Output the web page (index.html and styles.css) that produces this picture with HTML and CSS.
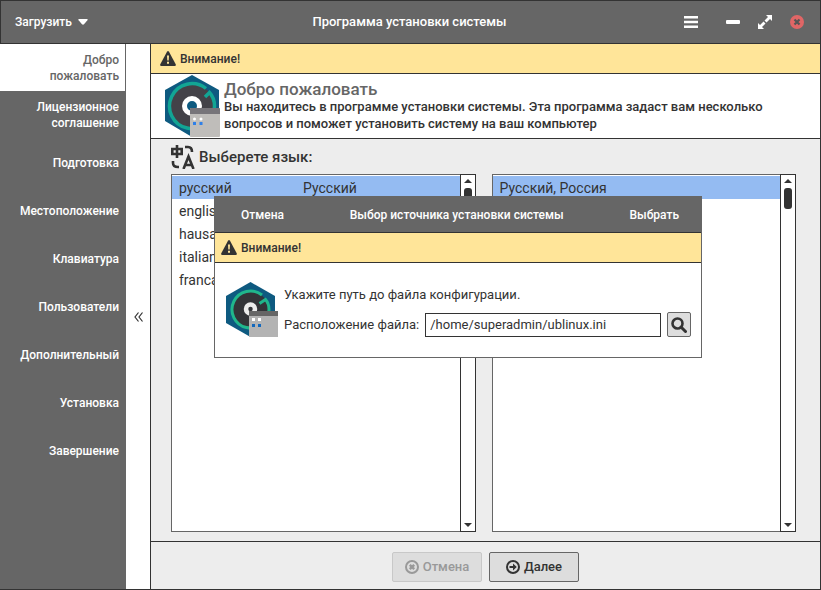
FILE: index.html
```html
<!DOCTYPE html>
<html lang="ru">
<head>
<meta charset="utf-8">
<meta name="viewport" content="width=device-width, initial-scale=1">
<title>Программа установки системы</title>
<link rel="stylesheet" href="styles.css">
</head>
<body>
<header class="titlebar">
  <button class="menu-button" type="button">Загрузить
    <svg width="10" height="6" viewBox="0 0 10 6" aria-hidden="true"><path d="M1 0h8q1.200 .3 .4 1.300L6 5.300q-1 .9-2 0L.6 1.300Q-.2.3 1 0z" fill="#fff"/></svg>
  </button>
  <h1 class="window-title">Программа установки системы</h1>
  <div class="window-controls">
    <button class="icon-button menu" type="button" aria-label="Меню">
      <svg width="14" height="12" viewBox="0 0 14 12"><path d="M0 1.200h14M0 6h14M0 10.800h14" stroke="#fff" stroke-width="2.400"/></svg>
    </button>
    <button class="icon-button" type="button" aria-label="Свернуть">
      <svg width="14" height="14" viewBox="0 0 14 14"><rect y="5" width="14" height="4" rx="1" fill="#fff"/></svg>
    </button>
    <button class="icon-button" type="button" aria-label="Развернуть">
      <svg width="14" height="14" viewBox="0 0 14 14"><path d="M8 0h6v6l-2-2-3.500 3.500-2-2L10 2zM0 8l2 2 3.500-3.500 2 2L4 12l2 2H0z" fill="#fff"/></svg>
    </button>
    <button class="icon-button" type="button" aria-label="Закрыть">
      <svg width="14" height="14" viewBox="0 0 14 14"><circle cx="7" cy="7" r="7" fill="#e06666"/><path d="M4.500 4.500l5 5m0-5l-5 5" stroke="#555" stroke-width="2.200"/></svg>
    </button>
  </div>
</header>

<div class="workspace">
  <nav class="steps" aria-label="Шаги установки">
    <a class="step current" href="#welcome">Добро пожаловать</a>
    <a class="step" href="#license">Лицензионное соглашение</a>
    <a class="step" href="#prepare">Подготовка</a>
    <a class="step" href="#location">Местоположение</a>
    <a class="step" href="#keyboard">Клавиатура</a>
    <a class="step" href="#users">Пользователи</a>
    <a class="step" href="#extra">Дополнительный</a>
    <a class="step" href="#install">Установка</a>
    <a class="step" href="#finish">Завершение</a>
  </nav>
  <button class="collapse" type="button" aria-label="Свернуть панель">
    <svg width="9" height="10" viewBox="0 0 9 10"><path d="M4.500.5L1 5l3.500 4.500M8.500.5L5 5l3.500 4.500" fill="none" stroke="#333" stroke-width="1.200"/></svg>
  </button>

  <main class="page">
    <div class="alert">
      <svg class="warning" viewBox="0 0 16 15" aria-hidden="true"><path d="M7 .8q1-1.600 2 0l6.700 12.400q.7 1.600-1 1.800H1.300q-1.700-.2-1-1.800z" fill="#333"/><path d="M7 4.500h2l-.3 5H7.300zM7 10.800h2v2H7z" fill="#ffe599"/></svg>
      Внимание!
    </div>
    <section class="welcome" id="welcome">
      <svg class="logo" width="55" height="62" viewBox="0 0 55 62" aria-hidden="true">
        <path d="M27 0l27 15v31L27 62 0 46V15z" fill="#0e5a80"/>
        <circle cx="27" cy="31" r="22" fill="#434248"/>
        <path d="M41 13.500A22.500 22.500 0 1 0 49.500 31q0-8-5-13.500l-4.500 4.500" fill="none" stroke="#12a594" stroke-width="3.500"/>
        <circle cx="27" cy="31" r="7.500" fill="#0e5a80" stroke="#fff" stroke-width="5"/>
        <rect x="25" y="33" width="30" height="29" rx="1" fill="#bfbdba"/>
        <path d="M25 39v-5q0-1 1-1h28q1 0 1 1v5z" fill="#77757a"/>
        <g fill="#fff"><circle cx="29.500" cy="44" r="1.500"/><circle cx="36" cy="44" r="1.500"/></g>
        <path d="M28 47h3v3h-3zM34.500 47h3v3h-3z" fill="#2f80e8"/>
      </svg>
      <div class="welcome-text">
        <h2 class="welcome-title">Добро пожаловать</h2>
        <p class="lead">Вы находитесь в программе установки системы. Эта программа задаст вам несколько вопросов и поможет установить систему на ваш компьютер</p>
      </div>
    </section>

    <section class="content">
      <h3 class="choose">
        <svg width="24" height="24" viewBox="0 0 24 24" aria-hidden="true"><g fill="none" stroke="#333" stroke-width="2.600"><path d="M1.300 4h9.400v5H1.300zM6 0v13M14 2h3q4 0 4 5M2 16v2q0 4 5 4h1"/><path d="M12.500 24l5-12.500 5 12.500M14.500 20h6"/></g></svg>
        Выберете язык:
      </h3>
      <div class="lists">
        <div class="listbox">
          <ul class="options">
            <li class="option selected"><span>русский</span><span>Русский</span></li>
            <li class="option"><span>english</span></li>
            <li class="option"><span>hausa</span></li>
            <li class="option"><span>italian</span></li>
            <li class="option"><span>francais</span></li>
          </ul>
          <div class="scrollbar"><i class="arrow up"></i><i class="thumb"></i><i class="arrow down"></i></div>
        </div>
        <div class="listbox">
          <ul class="options">
            <li class="option selected"><span class="full">Русский, Россия</span></li>
          </ul>
          <div class="scrollbar"><i class="arrow up"></i><i class="thumb"></i><i class="arrow down"></i></div>
        </div>
      </div>
    </section>

    <footer class="actions">
      <button class="action" type="button" disabled>
        <svg width="14" height="14" viewBox="0 0 14 14" aria-hidden="true"><circle cx="7" cy="7" r="6" fill="none" stroke="currentColor" stroke-width="2"/><path d="M4.800 4.800l4.400 4.400m0-4.400L4.800 9.200" stroke="currentColor" stroke-width="2.400"/></svg>
        Отмена
      </button>
      <button class="action" type="button">
        <svg width="14" height="14" viewBox="0 0 14 14" aria-hidden="true"><circle cx="7" cy="7" r="6" fill="none" stroke="currentColor" stroke-width="2"/><path d="M3.500 6H7V3.500L10.800 7 7 10.500V8H3.500z" fill="currentColor"/></svg>
        Далее
      </button>
    </footer>

    <div class="dialog" role="dialog" aria-labelledby="dialog-title">
      <div class="dialog-bar">
        <button class="dialog-button" type="button">Отмена</button>
        <h2 class="dialog-title" id="dialog-title">Выбор источника установки системы</h2>
        <button class="dialog-button" type="button">Выбрать</button>
      </div>
      <div class="alert dialog-alert">
        <svg class="warning" viewBox="0 0 16 15" aria-hidden="true"><path d="M7 .8q1-1.600 2 0l6.700 12.400q.7 1.600-1 1.800H1.300q-1.700-.2-1-1.800z" fill="#333"/><path d="M7 4.500h2l-.3 5H7.300zM7 10.800h2v2H7z" fill="#ffe599"/></svg>
        Внимание!
      </div>
      <div class="dialog-body">
        <svg class="logo" width="52" height="55" viewBox="0 0 52 55" aria-hidden="true">
          <path d="M24.500 0L49 14v27L24.500 55 0 41V14z" fill="#0e5a80"/>
          <circle cx="24.500" cy="27.500" r="18" fill="#333438"/>
          <path d="M36 13A18.500 18.500 0 1 0 43 27.500q0-6-3.500-10l-6 4" fill="none" stroke="#20b68c" stroke-width="3"/>
          <circle cx="24.500" cy="27" r="4.500" fill="#333438" stroke="#ececec" stroke-width="4.500"/>
          <path d="M23 29h29v26H23z" fill="#b3b3b3"/>
          <path d="M23 29h29v5H23z" fill="#666"/>
          <path d="M26 36h3v3h-3zM32 36h3v3h-3z" fill="#fff"/>
          <path d="M26 42h3v3h-3zM32 42h3v3h-3z" fill="#1268be"/>
        </svg>
        <form class="file-form">
          <p class="hint">Укажите путь до файла конфигурации.</p>
          <div class="file-row">
            <label for="path">Расположение файла:</label>
            <input class="path" id="path" type="text" value="/home/superadmin/ublinux.ini">
            <button class="browse" type="button" aria-label="Обзор">
              <svg width="16" height="16" viewBox="0 0 16 16"><circle cx="6.500" cy="6.500" r="5" fill="none" stroke="#333" stroke-width="2.600"/><path d="M10 10l4.500 4.500" stroke="#333" stroke-width="3" stroke-linecap="round"/></svg>
            </button>
          </div>
        </form>
      </div>
    </div>
  </main>
</div>
</body>
</html>
```
FILE: styles.css
```css
* { box-sizing: border-box; }

body {
  margin: 0;
  min-height: 100vh;
  display: flex;
  flex-direction: column;
  border: 1px solid #333;
  border-left: 0;
  background: #fff;
  color: #333;
  font: 500 13px/16px Roboto, "Liberation Sans", sans-serif;
}

h1, h2, h3, p, ul { margin: 0; padding: 0; }
ul { list-style: none; }
button, input { font: inherit; color: inherit; }
button { padding: 0; border: 0; background: none; }
svg { display: block; flex: none; }

.titlebar {
  display: grid;
  grid-template-columns: 1fr auto 1fr;
  align-items: center;
  height: 43px;
  padding: 0 16px 0 14px;
  border-bottom: 1px solid #333;
  border-left: 1px solid #333;
  background: #666;
  color: #fff;
}
.menu-button { display: flex; align-items: center; gap: 6px; justify-self: start; font-size: 12px; }
.window-title { font-size: 13px; font-weight: 500; }
.window-controls { display: flex; justify-content: flex-end; gap: 18px; }
.icon-button { display: flex; align-items: center; }
.menu { margin-right: 10px; }

.workspace { flex: 1; display: flex; }

.steps { flex: none; width: 126px; border-right: 1px solid #666; background: #666; }
.step {
  display: flex;
  align-items: center;
  justify-content: flex-end;
  height: 48px;
  padding: 0 6px 0 30px;
  color: #fff;
  font-size: 12px;
  text-align: right;
  text-decoration: none;
}
.current { height: 47px; background: #fff; color: #666; }
.collapse { flex: none; width: 24px; display: flex; align-items: center; justify-content: center; }

.page {
  position: relative;
  flex: 1;
  display: flex;
  flex-direction: column;
  border-left: 1px solid #333;
  background: #ededed;
}
.alert {
  display: flex;
  align-items: center;
  gap: 4px;
  height: 30px;
  padding: 0 9px;
  border-bottom: 1px solid #333;
  background: #ffe599;
  font-size: 12px;
}
.warning { width: 16px; height: 15px; }

.welcome {
  display: flex;
  gap: 4px;
  height: 65px;
  padding: 1px 32px 0 14px;
  border-bottom: 1px solid #333;
  background: #fff;
}
.welcome-text { padding-top: 6px; }
.welcome-title { color: #666; font-size: 17px; line-height: 17px; font-weight: 500; }
.lead { line-height: 17px; }

.content { flex: 1; display: flex; flex-direction: column; padding: 6px 24px 9px 20px; }
.choose { display: flex; align-items: center; gap: 4px; height: 24px; font-size: 15px; font-weight: 500; }
.lists { flex: 1; display: flex; gap: 16px; margin-top: 5px; }
.listbox { flex: 1; display: flex; border: 1px solid #666; background: #fff; }
.options { flex: 1; padding-top: 1px; }
.option { display: grid; grid-template-columns: 124px 1fr; align-items: center; height: 23px; padding: 0 7px; font-size: 14px; font-weight: 400; }
.full { grid-column: 1 / -1; }
.selected { background: #94bbf2; }
.scrollbar {
  width: 16px;
  margin: -1px;
  padding: 4px 3px;
  border: 1px solid #333;
  display: flex;
  flex-direction: column;
  align-items: center;
}
.arrow { border: 4px solid transparent; }
.up { border-top: 0; border-bottom-color: #333; }
.down { border-bottom: 0; border-top-color: #333; margin-top: auto; }
.thumb { width: 8px; height: 21px; margin-top: 5px; border-radius: 3px; background: #333; }

.actions {
  display: flex;
  justify-content: center;
  gap: 7px;
  height: 48px;
  padding: 10px 0 7px;
  border-top: 1px solid #333;
}
.action {
  display: flex;
  align-items: center;
  justify-content: center;
  gap: 4px;
  width: 90px;
  height: 30px;
  border: 1px solid #666;
  border-radius: 2px;
  background: #ddd;
}
.action:disabled { border-color: #c8c8c8; color: #999; }

.dialog {
  position: absolute;
  top: 152px;
  left: 63px;
  width: 488px;
  border: 1px solid #666;
  background: #fff;
}
.dialog-bar {
  display: flex;
  align-items: center;
  justify-content: space-between;
  height: 36px;
  padding: 0 22px 0 26px;
  border-bottom: 1px solid #333;
  background: #666;
  color: #fff;
  font-size: 12px;
}
.dialog-title { font-size: 12px; font-weight: 500; }
.dialog-alert { padding: 0 6px; }
.dialog-body { display: flex; gap: 6px; padding: 19px 10px 20px 11px; font-weight: 400; }
.file-form { flex: 1; padding-top: 5px; }
.file-row { display: flex; align-items: center; gap: 6px; margin-top: 9px; }
.path { flex: 1; min-width: 0; height: 24px; padding: 0 4px; border: 1px solid #333; background: #fff; }
.browse {
  display: flex;
  align-items: center;
  justify-content: center;
  width: 24px;
  height: 25px;
  border: 1px solid #666;
  border-radius: 2px;
  background: #ddd;
}
```
